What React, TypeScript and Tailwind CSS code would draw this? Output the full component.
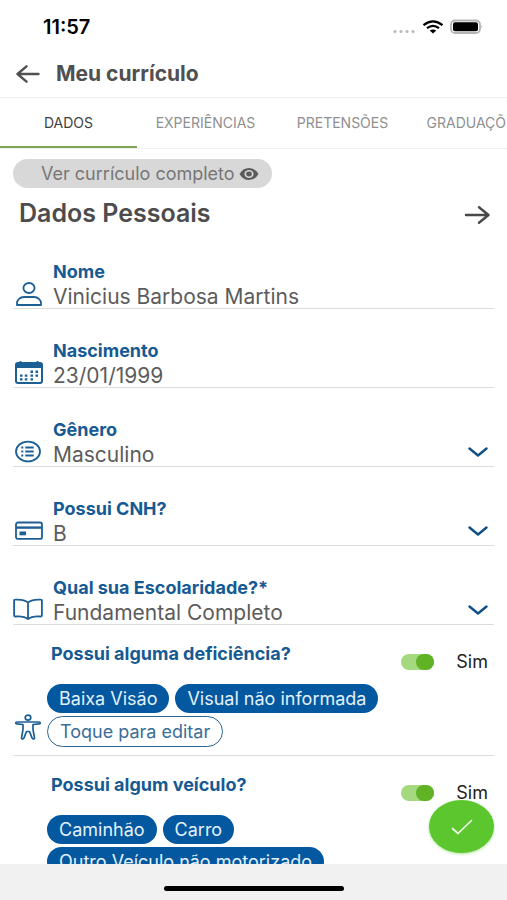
import { useState } from 'react';
import type { ReactNode } from 'react';

const TABS = ['DADOS', 'EXPERIÊNCIAS', 'PRETENSÕES', 'GRADUAÇÕES'];

const FIELDS = [
  { id: 'nome', label: 'Nome', value: 'Vinicius Barbosa Martins', icon: <PersonIcon /> },
  { id: 'nascimento', label: 'Nascimento', value: '23/01/1999', icon: <CalendarIcon /> },
  {
    id: 'genero',
    label: 'Gênero',
    value: 'Masculino',
    options: ['Masculino', 'Feminino'],
    icon: <ListIcon />,
  },
  { id: 'cnh', label: 'Possui CNH?', value: 'B', options: ['A', 'B', 'AB'], icon: <CardIcon /> },
  {
    id: 'escolaridade',
    label: 'Qual sua Escolaridade?*',
    value: 'Fundamental Completo',
    options: ['Fundamental Completo', 'Médio Completo', 'Superior Completo'],
    icon: <BookIcon />,
  },
];

function PersonIcon() {
  return (
    <svg width="30" height="26" viewBox="0 0 30 26" fill="none" stroke="#1c5f95" strokeWidth="1.8" strokeLinejoin="round">
      <ellipse cx="16" cy="7" rx="5.6" ry="5" />
      <path d="M4 24v-1.700c0-3.300 3-6.300 7-6.300h10c4 0 7 3 7 6.300V24z" />
    </svg>
  );
}

function CalendarIcon() {
  return (
    <svg width="30" height="26" viewBox="0 0 30 26" fill="none">
      <rect x="3" y="3" width="26" height="20" rx="2" stroke="#1c5f95" strokeWidth="2" />
      <path d="M2.500 4.500q0-1.500 2-1.500h23q2 0 2 1.500V8h-27z" fill="#1c5f95" />
      <path d="M7.500 1v3M24.500 1v3" stroke="#1c5f95" strokeWidth="1.800" />
      <path
        d="M17.500 11.800H20M22.500 11.800H25M7 15.600h2.500M11.800 15.600h2.500M17.500 15.600H20M22.500 15.600H25M7 19.400h2.500M11.800 19.400h2.500M17.500 19.400H20"
        stroke="#1c5f95"
        strokeWidth="2.400"
      />
    </svg>
  );
}

function ListIcon() {
  return (
    <svg width="30" height="26" viewBox="0 0 30 26" fill="none" stroke="#1c5f95">
      <ellipse cx="15" cy="12.500" rx="12" ry="9.800" strokeWidth="1.800" />
      <path d="M12.300 8.500h8.400M12.300 12.500h8.400M12.300 16.500h8.400M8.300 8.500h2M8.300 12.500h2M8.300 16.500h2" strokeWidth="1.800" />
    </svg>
  );
}

function CardIcon() {
  return (
    <svg width="30" height="26" viewBox="0 0 30 26" fill="none">
      <rect x="3" y="4.500" width="26" height="16.400" rx="2" stroke="#1c5f95" strokeWidth="1.800" />
      <path d="M3 9.600h26" stroke="#1c5f95" strokeWidth="2.400" />
      <rect x="6.500" y="13.500" width="6.500" height="3.800" fill="#1c5f95" />
    </svg>
  );
}

function BookIcon() {
  return (
    <svg width="30" height="26" viewBox="0 0 30 26" fill="none" stroke="#1c5f95" strokeWidth="1.800" strokeLinejoin="round" strokeLinecap="round">
      <path d="M15 5.500C12 3.100 7 2.300 2 2.700q-.9 0-.9.900v15q0 .900.900.900c5-.4 9.900-.2 13 2.600 3.100-2.800 8-3 13-2.600q.9 0 .9-.9v-15q0-.9-.9-.9C23 2.300 18 3.100 15 5.500zM15 5.500v16" />
    </svg>
  );
}

function BodyIcon() {
  return (
    <svg width="30" height="28" viewBox="0 0 30 28" fill="none" stroke="#1c5f95" strokeWidth="1.700" strokeLinejoin="round">
      <ellipse cx="15" cy="4.600" rx="2.800" ry="2.500" />
      <path d="M4 9h22q1.300 0 1.300.900T26 10.800l-6 .7v5l1.500 8.300q.1 1-1 1-1.300 0-1.500-.9L16.500 18.500h-3L11 24.900q-.2.900-1.500.9-1.100 0-1-1L10 16.500v-5l-6-.7q-1.300 0-1.300-.9T4 9z" />
    </svg>
  );
}

function StatusBar() {
  return (
    <div className="flex h-[50px] shrink-0 items-center justify-between pt-1 pr-6 pl-[43px]">
      <span className="text-xl font-semibold text-black">11:57</span>
      <svg width="90" height="16" viewBox="0 0 90 16" fill="none">
        <g fill="#b9b9b9">
          <circle cx="2" cy="12.500" r="1.600" />
          <circle cx="8" cy="12.500" r="1.600" />
          <circle cx="14" cy="12.500" r="1.600" />
          <circle cx="20" cy="12.500" r="1.600" />
        </g>
        <g stroke="#000" strokeWidth="2.300">
          <path d="M30.500 6.200q9.500-7.600 19 0" />
          <path d="M34 9.200q6-4.600 12 0" />
        </g>
        <path d="M36.700 11.600q3.300-2.200 6.600 0L40 14.500z" fill="#000" />
        <rect x="58" y="1.500" width="29" height="12.500" rx="4" stroke="#b5b5b5" strokeWidth="1.800" fill="#fff" />
        <rect x="60" y="3.200" width="25" height="9" rx="2" fill="#000" />
        <path d="M88.500 6v3.500q1.500-1.700 0-3.500z" fill="#999" />
      </svg>
    </div>
  );
}

function Field({ id, label, value, options, icon }: (typeof FIELDS)[number]) {
  return (
    <div className="flex h-[79px] items-end border-b border-[#dcdcdc]">
      <div className="w-10 shrink-0 pb-px">{icon}</div>
      <div className="relative min-w-0 flex-1">
        <label htmlFor={id} className="block text-lg leading-6 font-bold text-[#165a93]">
          {label}
        </label>
        {options ? (
          <>
            <select
              id={id}
              defaultValue={value}
              className="block h-6 w-full appearance-none bg-transparent pt-px text-[21px] leading-6 text-[#5c5c5c] outline-none"
            >
              {options.map((option) => (
                <option key={option}>{option}</option>
              ))}
            </select>
            <svg
              className="pointer-events-none absolute right-1.5 bottom-2"
              width="20"
              height="12"
              viewBox="0 0 20 12"
              fill="none"
              stroke="#0f4f86"
              strokeWidth="2.400"
              strokeLinecap="round"
              strokeLinejoin="round"
            >
              <path d="M1.500 2.500 10 9.500l8.500-7" />
            </svg>
          </>
        ) : (
          <input
            id={id}
            defaultValue={value}
            className="block h-6 w-full bg-transparent pt-px text-[21px] leading-6 text-[#5c5c5c] outline-none"
          />
        )}
      </div>
    </div>
  );
}

function Chip({ children }: { children: ReactNode }) {
  return <button className="h-[29px] rounded-full bg-[#04589f] px-3 text-lg leading-6 text-[#e3f1fb]">{children}</button>;
}

function Question({ id, label, icon, children }: { id: string; label: string; icon?: ReactNode; children: ReactNode }) {
  const [on, setOn] = useState(true);

  return (
    <div className="border-b border-[#dcdcdc] pt-[19px] pb-2">
      <div className="flex items-start justify-between pr-1.5 pl-[38px]">
        <label htmlFor={id} className="text-lg leading-5 font-bold text-[#165a93]">
          {label}
        </label>
        <label className="flex h-9 items-center gap-[22px] text-lg leading-6 text-[#222]">
          <input
            id={id}
            type="checkbox"
            role="switch"
            checked={on}
            onChange={() => setOn(!on)}
            className="peer sr-only"
          />
          <span className="flex h-4 w-[33px] justify-start rounded-full bg-[#c9c9c9] peer-checked:justify-end peer-checked:bg-[#a5d97f]">
            <span className="h-4 w-[18px] rounded-full bg-[#5fb324]" />
          </span>
          {on ? 'Sim' : 'Não'}
        </label>
      </div>
      <div className="mt-1 flex items-end">
        <div className="w-[34px] shrink-0 pb-1.5">{icon}</div>
        <div className="flex flex-wrap gap-x-[6px] gap-y-[3px]">{children}</div>
      </div>
    </div>
  );
}

export default function App() {
  const [tab, setTab] = useState('DADOS');

  return (
    <div className="relative flex h-screen flex-col overflow-hidden bg-white font-['Inter',sans-serif]">
      <StatusBar />

      <header className="flex h-12 shrink-0 items-center gap-4 border-b border-[#eeeeee] px-4">
        <button aria-label="Voltar">
          <svg width="24" height="20" viewBox="0 0 24 20" fill="none" stroke="#505050" strokeWidth="2.400" strokeLinecap="round" strokeLinejoin="round">
            <path d="M22.500 10H1.500M10.500 2.300 1.500 10l9 7.700" />
          </svg>
        </button>
        <h1 className="text-[21px] font-bold text-[#505050]">Meu currículo</h1>
      </header>

      <nav className="flex h-[51px] shrink-0 overflow-hidden border-b border-[#f1f1f1]">
        {TABS.map((name) => (
          <button
            key={name}
            onClick={() => setTab(name)}
            className={`h-full w-[137px] shrink-0 border-b-2 pt-0.5 text-sm last:w-32 ${
              tab === name ? 'border-[#7ba653] text-[#3f3f3f]' : 'border-transparent text-[#8f8f8f]'
            }`}
          >
            {name}
          </button>
        ))}
      </nav>

      <main className="min-h-0 flex-1 overflow-y-auto px-[13px] pt-2.5 [scrollbar-width:none]">
        <button className="flex h-[29px] items-center gap-1 rounded-full bg-[#d8d8d8] pr-[13px] pl-7 text-lg leading-6 text-[#777777]">
          Ver currículo completo
          <svg width="20" height="14" viewBox="0 0 20 14">
            <path d="M.5 7Q4 1 10 1t9.500 6Q16 13 10 13T.5 7z" fill="#5a5a5a" />
            <ellipse cx="10" cy="7" rx="4.600" ry="4" fill="#d8d8d8" />
            <ellipse cx="10" cy="7" rx="2.800" ry="2.400" fill="#5a5a5a" />
          </svg>
        </button>

        <div className="flex h-[42px] items-center justify-between pt-2 pr-1 pl-1.5">
          <h2 className="text-[25px] leading-7 font-semibold text-[#4c4c4c]">Dados Pessoais</h2>
          <button aria-label="Avançar" className="pt-1">
            <svg width="26" height="20" viewBox="0 0 26 20" fill="none" stroke="#484848" strokeWidth="2.400" strokeLinecap="round" strokeLinejoin="round">
              <path d="M2 10h22M15 2.300l9.500 7.700-9.500 7.700" />
            </svg>
          </button>
        </div>

        <div>
          {FIELDS.map((field) => (
            <Field key={field.id} {...field} />
          ))}
        </div>

        <Question id="deficiencia" label="Possui alguma deficiência?" icon={<BodyIcon />}>
          <Chip>Baixa Visão</Chip>
          <Chip>Visual não informada</Chip>
          <button className="h-[31px] rounded-full border border-[#2b6593] px-3 text-lg leading-6 text-[#3b6e98]">
            Toque para editar
          </button>
        </Question>

        <Question id="veiculo" label="Possui algum veículo?">
          <Chip>Caminhão</Chip>
          <Chip>Carro</Chip>
          <Chip>Outro Veículo não motorizado</Chip>
        </Question>
      </main>

      <footer className="flex h-9 shrink-0 justify-center bg-[#f1f1f1] pt-[22px]">
        <div className="h-[5px] w-[180px] rounded-full bg-black" />
      </footer>

      {/* Save button floats over the form */}
      <button
        aria-label="Salvar"
        className="absolute right-[13px] bottom-[47px] flex h-[53px] w-[65px] items-center justify-center rounded-[50%] bg-[#5bc62e] shadow-[0_1px_3px_#5bc62e80]"
      >
        <svg width="22" height="16" viewBox="0 0 22 16" fill="none" stroke="#eefbe6" strokeWidth="1.700" strokeLinecap="round" strokeLinejoin="round">
          <path d="M1.500 9.500 7 14.500 20.500 1.500" />
        </svg>
      </button>
    </div>
  );
}
